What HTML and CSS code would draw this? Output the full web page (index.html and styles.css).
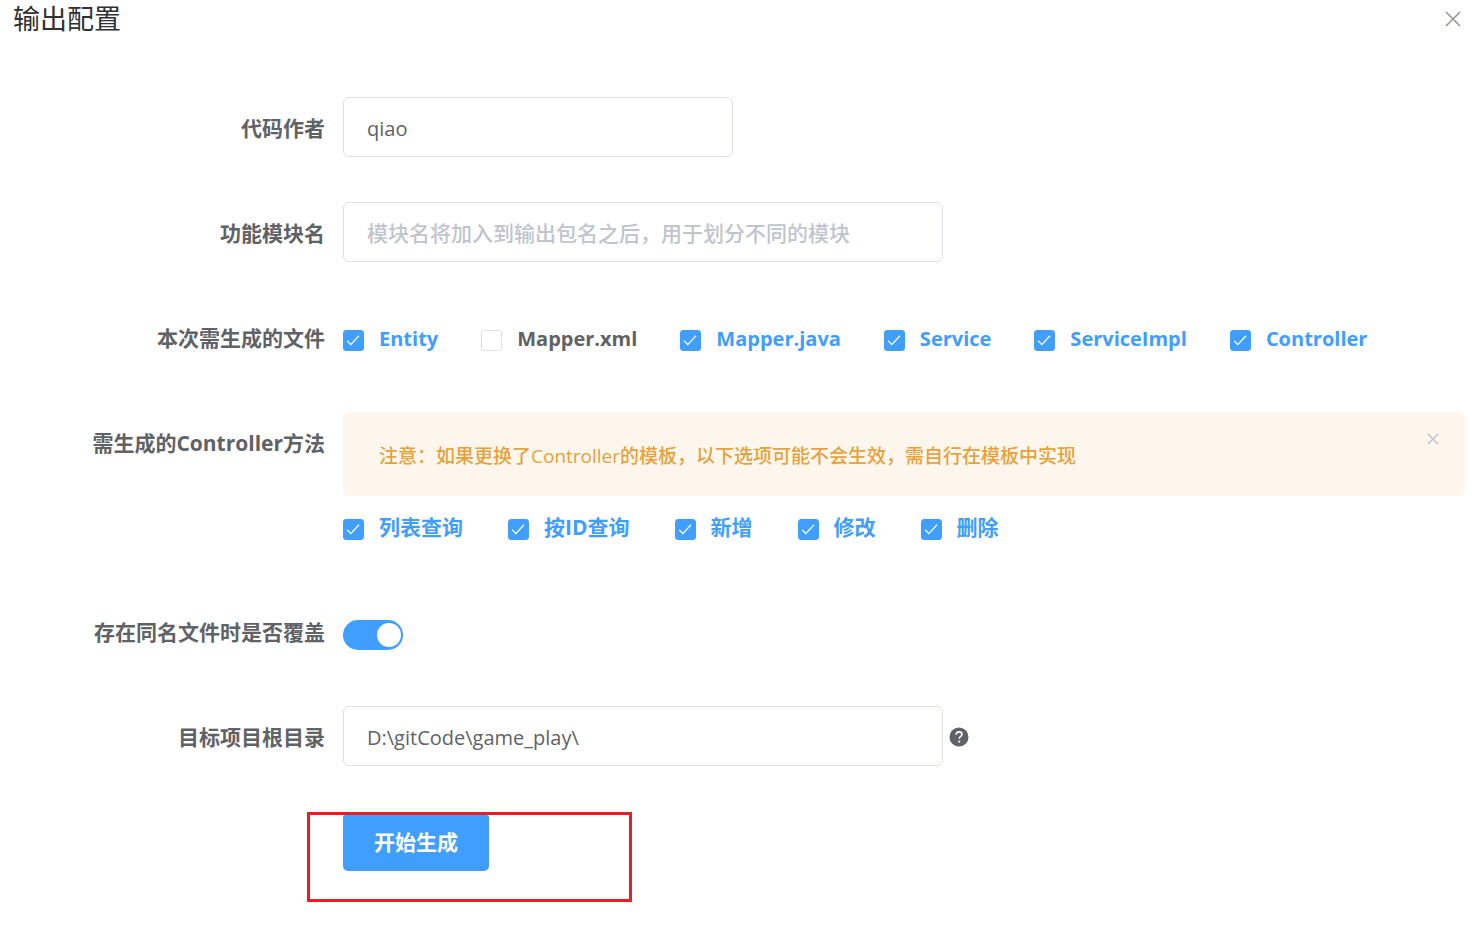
FILE: index.html
```html
<!DOCTYPE html>
<html lang="zh-CN">
<head>
<meta charset="utf-8">
<title>输出配置</title>
<link rel="stylesheet" href="styles.css">
</head>
<body>
<main class="dialog">
  <header class="dialog-header">
    <h1 class="dialog-title">输出配置</h1>
    <button class="icon-button" type="button" aria-label="关闭">
      <svg class="close-icon" viewBox="0 0 16 16"><path d="M1 1 15 15M15 1 1 15"/></svg>
    </button>
  </header>
  <form class="form">
    <div class="form-item">
      <label class="form-label" for="author">代码作者</label>
      <div class="form-content"><input class="text-input text-input-short" id="author" type="text" value="qiao"></div>
    </div>
    <div class="form-item">
      <label class="form-label" for="module">功能模块名</label>
      <div class="form-content"><input class="text-input" id="module" type="text" placeholder="模块名将加入到输出包名之后，用于划分不同的模块"></div>
    </div>
    <div class="form-item" role="group" aria-labelledby="files-label">
      <span class="form-label" id="files-label">本次需生成的文件</span>
      <div class="form-content check-group check-group-files">
        <label class="check"><input class="check-box" type="checkbox" checked><span>Entity</span></label>
        <label class="check"><input class="check-box" type="checkbox"><span>Mapper.xml</span></label>
        <label class="check"><input class="check-box" type="checkbox" checked><span>Mapper.java</span></label>
        <label class="check"><input class="check-box" type="checkbox" checked><span>Service</span></label>
        <label class="check"><input class="check-box" type="checkbox" checked><span>ServiceImpl</span></label>
        <label class="check"><input class="check-box" type="checkbox" checked><span>Controller</span></label>
      </div>
    </div>
    <div class="form-item" role="group" aria-labelledby="methods-label">
      <span class="form-label" id="methods-label">需生成的Controller方法</span>
      <div class="form-content form-content-stack">
        <div class="alert" role="alert">
          <p class="alert-text">注意：如果更换了Controller的模板，以下选项可能不会生效，需自行在模板中实现</p>
          <button class="icon-button alert-close" type="button" aria-label="关闭提示">
            <svg class="close-icon close-icon-small" viewBox="0 0 16 16"><path d="M1 1 15 15M15 1 1 15"/></svg>
          </button>
        </div>
        <div class="check-group">
          <label class="check"><input class="check-box" type="checkbox" checked><span>列表查询</span></label>
          <label class="check"><input class="check-box" type="checkbox" checked><span>按ID查询</span></label>
          <label class="check"><input class="check-box" type="checkbox" checked><span>新增</span></label>
          <label class="check"><input class="check-box" type="checkbox" checked><span>修改</span></label>
          <label class="check"><input class="check-box" type="checkbox" checked><span>删除</span></label>
        </div>
      </div>
    </div>
    <div class="form-item">
      <label class="form-label" for="override">存在同名文件时是否覆盖</label>
      <div class="form-content"><input class="switch" id="override" type="checkbox" role="switch" checked></div>
    </div>
    <div class="form-item">
      <label class="form-label" for="root">目标项目根目录</label>
      <div class="form-content">
        <input class="text-input" id="root" type="text" value="D:\gitCode\game_play\">
        <svg class="help-icon" viewBox="0 0 20 20" role="img" aria-label="帮助"><circle cx="10" cy="10" r="9.5"/><path d="M7.2 7.7C7.2 5.9 8.4 4.9 10.1 4.9s2.9 1 2.9 2.5c0 2-2.8 2.1-2.8 4.3"/><circle class="help-dot" cx="10.2" cy="14.6" r="1.1"/></svg>
      </div>
    </div>
    <div class="form-item form-actions">
      <div class="highlight"><button class="submit" type="button">开始生成</button></div>
    </div>
  </form>
</main>
</body>
</html>
```
FILE: styles.css
```css
* {
  box-sizing: border-box;
}

body {
  margin: 0;
  background: #fff;
  color: #606266;
  font-family: "Open Sans", "Noto Sans CJK SC", sans-serif;
  font-size: 21px;
}

button,
input {
  font: inherit;
}

.dialog {
  padding: 0 9px 38px 13px;
}

.dialog-header {
  display: flex;
  align-items: center;
  justify-content: space-between;
  height: 38px;
}

.dialog-title {
  margin: 0;
  color: #303133;
  font-size: 27px;
  font-weight: 400;
  line-height: 38px;
}

.icon-button {
  display: flex;
  padding: 4px;
  border: 0;
  background: none;
}

.close-icon {
  width: 16px;
  height: 16px;
  fill: none;
  stroke: #909399;
  stroke-width: 1.5;
}

.close-icon-small {
  width: 12px;
  height: 12px;
  stroke: #c0c4cc;
  stroke-width: 2;
}

.form {
  display: flex;
  flex-direction: column;
  gap: 45px;
  padding-top: 59px;
}

.form-item {
  display: flex;
  align-items: flex-start;
}

.form-label {
  flex: none;
  width: 330px;
  padding-right: 18px;
  font-weight: 700;
  line-height: 62px;
  height: 60px;
  text-align: right;
  white-space: nowrap;
}

.form-content {
  display: flex;
  flex: 1;
  align-items: center;
  min-width: 0;
  min-height: 60px;
}

.form-content-stack {
  flex-direction: column;
  align-items: stretch;
}

.text-input {
  width: 600px;
  height: 60px;
  padding: 2px 23px 0;
  border: 1px solid #dcdfe6;
  border-radius: 6px;
  background: #fff;
  color: #606266;
  font-size: 20px;
}

.text-input::placeholder {
  color: #c0c4cc;
  font-size: 21px;
  font-weight: 500;
}

.text-input-short {
  width: 390px;
}

.check-group {
  display: flex;
  align-items: center;
  gap: 45px;
  height: 60px;
  padding-top: 6px;
}

.check-group-files {
  gap: 43px;
  font-size: 20px;
}

.check {
  display: flex;
  align-items: center;
  gap: 15px;
  font-weight: 700;
  line-height: 30px;
  white-space: nowrap;
}

.check span {
  padding-bottom: 4px;
}

.check-group-files span {
  padding-bottom: 2px;
}

.check:has(:checked) {
  color: #409eff;
}

.check-box {
  width: 21px;
  height: 21px;
  margin: 0;
  appearance: none;
  border: 1px solid #dcdfe6;
  border-radius: 3px;
  background: #fff;
}

.check-box:checked {
  border-color: #409eff;
  background: #409eff url("data:image/svg+xml,%3Csvg xmlns='http://www.w3.org/2000/svg' viewBox='0 0 19 19'%3E%3Cpath d='M3.2 9.8 6.8 13.6 15 4.8' fill='none' stroke='white' stroke-width='1.3'/%3E%3C/svg%3E") center / 19px no-repeat;
}

.alert {
  display: flex;
  align-items: flex-start;
  justify-content: space-between;
  padding: 16px 21px 12px 36px;
  border-radius: 6px;
  background: #fdf6ec;
  color: #e6a23c;
}

.alert-text {
  margin: 0;
  font-size: 19px;
  font-weight: 500;
  line-height: 56px;
}

.alert-close {
  padding: 5px;
}

.switch {
  width: 60px;
  height: 30px;
  margin: 8px 0 0;
  appearance: none;
  border-radius: 15px;
  background: #dcdfe6 radial-gradient(circle at 14px 15px, #fff 12px, transparent 13px);
}

.switch:checked {
  background: #409eff radial-gradient(circle at 46px 15px, #fff 11.5px, transparent 12.5px);
}

.help-icon {
  width: 20px;
  height: 20px;
  margin: 2px 0 0 6px;
  fill: #606266;
}

.help-icon path {
  fill: none;
  stroke: #fff;
  stroke-width: 1.6;
}

.help-icon .help-dot {
  fill: #fff;
}

.form-actions {
  padding-left: 294px;
}

.highlight {
  width: 325px;
  height: 90px;
  margin-top: 1px;
  padding-left: 33px;
  border: 3px solid #ed1c24;
}

.submit {
  height: 56px;
  padding: 0 31px 4px;
  border: 0;
  border-radius: 2px 2px 5px 5px;
  background: #409eff;
  color: #fff;
  font-weight: 700;
}
```
